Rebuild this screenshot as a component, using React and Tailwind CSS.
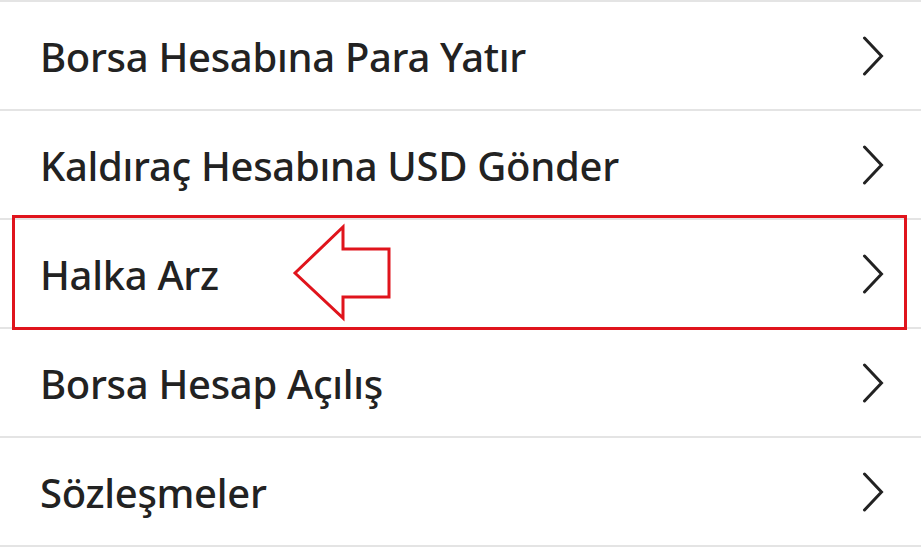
const ITEMS = [
  "Borsa Hesabına Para Yatır",
  "Kaldıraç Hesabına USD Gönder",
  "Halka Arz",
  "Borsa Hesap Açılış",
  "Sözleşmeler",
];

function Chevron() {
  return (
    <svg width="22" height="40" viewBox="0 0 22 40" fill="none" className="shrink-0">
      <path d="M2.5 2 L19.5 20 L2.5 38" stroke="#222" strokeWidth="3" strokeLinecap="round" strokeLinejoin="miter" />
    </svg>
  );
}

export default function App() {
  return (
    <div className="relative w-[921px] h-[551px] bg-white overflow-hidden" style={{ fontFamily: '"Noto Sans", "Open Sans", sans-serif' }}>
      <ul className="border-t-2 border-[#e4e4e4]">
        {ITEMS.map((t) => (
          <li key={t} className="h-[109px] border-b-2 border-[#e4e4e4] flex items-center justify-between pl-[40px] pr-[37px]">
            <span className="text-[40px] font-medium text-[#222222] tracking-[-0.3px] pt-[2px]">{t}</span>
            <Chevron />
          </li>
        ))}
      </ul>
      {/* annotation */}
      <div className="absolute left-[12px] top-[215px] w-[895px] h-[115px] border-[3px] border-[#e0141c]" />
      <svg className="absolute left-[290px] top-[222px]" width="104" height="102" viewBox="290 222 104 102" fill="none">
        <path d="M295 273 L343 227 L343 249 L389 249 L389 297 L343 297 L343 318 Z" stroke="#e0141c" strokeWidth="3" strokeLinejoin="miter" />
      </svg>
    </div>
  );
}
